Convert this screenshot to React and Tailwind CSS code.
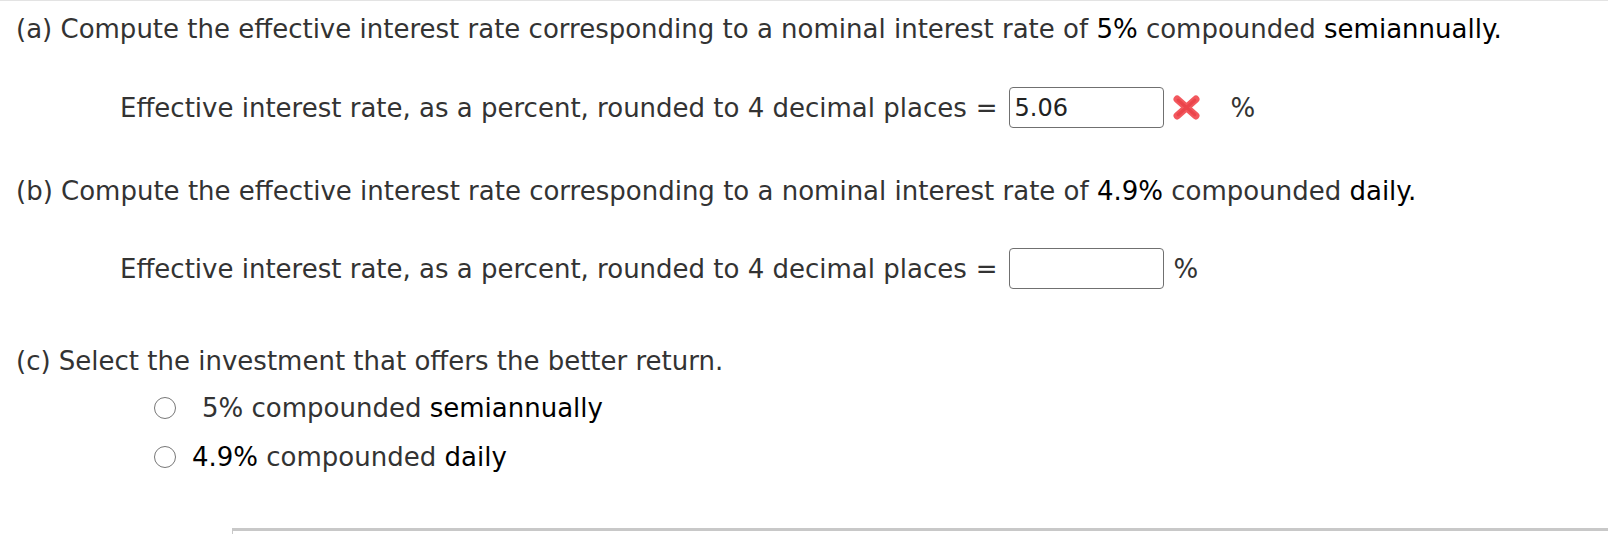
import React from 'react';

const font = { fontFamily: '"DejaVu Sans", Verdana, sans-serif' };

const RedX = () => (
    <svg width="29" height="27" viewBox="0 0 28 26" className="shrink-0">
        <g stroke="#f2585e" strokeWidth="7" strokeLinecap="round">
            <line x1="5" y1="5" x2="23" y2="21" />
            <line x1="23" y1="5" x2="5" y2="21" />
        </g>
        <g stroke="#e6343c" strokeWidth="3" strokeLinecap="round" opacity="0.55">
            <line x1="6" y1="6" x2="22" y2="20" />
            <line x1="22" y1="6" x2="6" y2="20" />
        </g>
    </svg>
);

const AnswerRow = ({ value, wrong }) => (
    <div className="flex items-center pl-[120px] h-[41px] text-[#333]">
        <span className="whitespace-nowrap">Effective interest rate, as a percent, rounded to 4 decimal places</span>
        <span className="ml-[9px] mr-[11px]">=</span>
        <div className="w-[155px] h-[41px] shrink-0 border-[1.5px] border-[#707070] rounded-[4px] flex items-center pl-[5px] text-[24px] text-[#222]">
            {value}
        </div>
        {wrong ? (
            <>
                <div className="ml-[8px] flex"><RedX /></div>
                <span className="ml-[30px]">%</span>
            </>
        ) : (
            <span className="ml-[10px]">%</span>
        )}
    </div>
);

const Radio = ({ children, gap }) => (
    <div className="flex items-center">
        <div className="w-[22px] h-[22px] rounded-full border-[1.5px] border-[#777] bg-white shrink-0" />
        <span className={gap}>{children}</span>
    </div>
);

export default function App() {
    return (
        <div className="w-[1608px] h-[534px] bg-white overflow-hidden border-t border-[#e3e3e3] text-[#333] text-[26px] leading-[32px]" style={font}>
            <div className="pl-[16px] pt-[12px] whitespace-nowrap">
                (a) Compute the effective interest rate corresponding to a nominal interest rate of <span className="text-black">5%</span> compounded <span className="text-black">semiannually.</span>
            </div>
            <div className="mt-[42px]">
                <AnswerRow value="5.06" wrong />
            </div>
            <div className="pl-[16px] mt-[47px] whitespace-nowrap">
                (b) Compute the effective interest rate corresponding to a nominal interest rate of <span className="text-black">4.9%</span> compounded <span className="text-black">daily.</span>
            </div>
            <div className="mt-[41px]">
                <AnswerRow value="" />
            </div>
            <div className="pl-[16px] mt-[56px]">
                (c) Select the investment that offers the better return.
            </div>
            <div className="pl-[154px] mt-[15px] flex flex-col gap-[17px]">
                <Radio gap="ml-[26px]">5% compounded <span className="text-black">semiannually</span></Radio>
                <Radio gap="ml-[16px]"><span className="text-black">4.9%</span> compounded <span className="text-black">daily</span></Radio>
            </div>
            <div className="ml-[232px] mt-[55px] h-[10px] border-t-[3px] border-l border-[#c8c8c8]" />
        </div>
    );
}
